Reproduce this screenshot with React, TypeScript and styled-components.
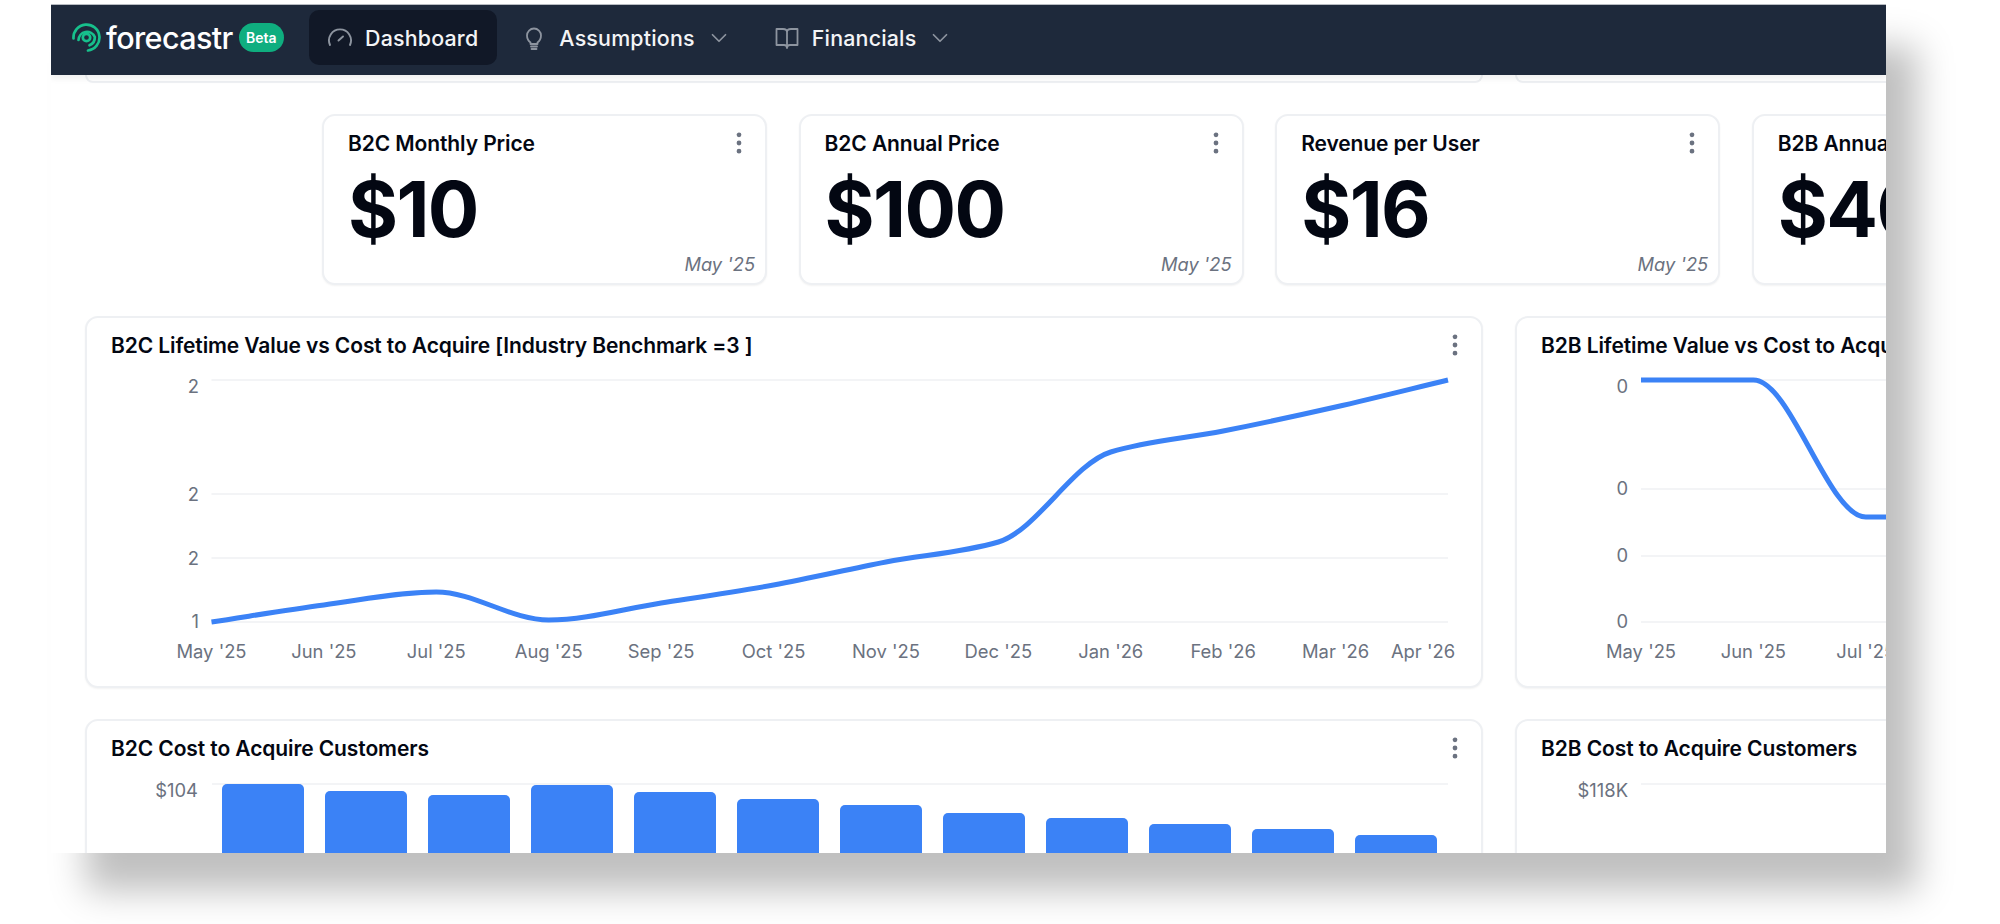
import React from 'react'
import styled, { createGlobalStyle } from 'styled-components'
import { ChevronDown, EllipsisVertical } from 'lucide-react'

const GlobalStyle = createGlobalStyle`
  html, body { margin: 0; background: #fff; }
  body { font-family: Inter, "Liberation Sans", sans-serif; }
  * { box-sizing: border-box; }
`

const Page = styled.div`
  width: 2000px;
  height: 924px;
  padding: 4px 0 0 51px;
  overflow: hidden;
`

const Panel = styled.div`
  width: 1835px;
  height: 849px;
  background: #fff;
  overflow: hidden;
  border-top: 1px solid #b8bcc2;
  box-shadow: 33px 40px 34px -2px rgba(0, 0, 0, 0.25);
`

const Nav = styled.nav`
  position: relative;
  z-index: 1;
  height: 70px;
  padding: 0 0 5px 21px;
  display: flex;
  align-items: center;
  gap: 6px;
  background: #1e293b;
  box-shadow: 0 4px 6px rgba(0, 0, 0, 0.06);
`

const Logo = styled.div`
  display: flex;
  align-items: center;
  width: 231px;
  flex-shrink: 0;
`

const LogoText = styled.span`
  margin-left: 5px;
  font-size: 30.5px;
  font-weight: 500;
  letter-spacing: -0.6px;
  color: #fff;
`

const BetaBadge = styled.span`
  margin-left: 6px;
  width: 45px;
  height: 29px;
  border-radius: 15px;
  display: flex;
  align-items: center;
  justify-content: center;
  background: #0fae7f;
  color: #fff;
  font-size: 14px;
  font-weight: 600;
`

const NavItem = styled.div<{ $active?: boolean }>`
  height: 55px;
  padding: 0 ${(p) => (p.$active ? 19 : 18)}px 0 18px;
  display: flex;
  align-items: center;
  gap: 12px;
  flex-shrink: 0;
  border-radius: 10px;
  background: ${(p) => (p.$active ? '#111827' : 'transparent')};
  color: #f3f4f6;
  font-size: 21.4px;
  font-weight: 500;
  letter-spacing: 0.2px;
  svg { flex-shrink: 0; color: #8d949f; }
`

const Chevron = styled(ChevronDown)`
  margin-left: -1px;
`

const Content = styled.main`
  padding-left: 34px;
`

const Row = styled.section<{ $indent?: number; $gap?: number; $top?: number }>`
  display: flex;
  gap: ${(p) => p.$gap ?? 32}px;
  margin-top: ${(p) => p.$top ?? 31}px;
  margin-left: ${(p) => p.$indent || 0}px;
`

const Stub = styled.div`
  width: 1398px;
  height: 8px;
  flex-shrink: 0;
  border: 2px solid #eef0f3;
  border-top: 0;
  border-radius: 0 0 13px 13px;
`

const Card = styled.article<{ $width: number; $height: number }>`
  position: relative;
  width: ${(p) => p.$width}px;
  height: ${(p) => p.$height}px;
  flex-shrink: 0;
  background: #fff;
  border: 2px solid #eef0f3;
  border-radius: 13px;
  box-shadow: 0 1px 2px rgba(0, 0, 0, 0.05);
`

const CardHeader = styled.header`
  height: 52px;
  padding: 2px 12px 0 24px;
  display: flex;
  align-items: center;
  justify-content: space-between;
  svg { color: #6b7280; flex-shrink: 0; }
`

const CardTitle = styled.h3`
  margin: 0;
  font-size: 21px;
  font-weight: 600;
  letter-spacing: -0.1px;
  white-space: nowrap;
  color: #030712;
`

const KpiValue = styled.div`
  margin: 3px 0 0 24px;
  font-size: 76.5px;
  line-height: 76px;
  font-weight: 700;
  letter-spacing: -1.6px;
  color: #030712;
`

const KpiDate = styled.span`
  position: absolute;
  right: 10px;
  bottom: 8px;
  font-size: 18.3px;
  font-style: italic;
  color: #6b7280;
`

const Plot = styled.svg`
  display: block;
  overflow: visible;
  text {
    font-family: Inter, "Liberation Sans", sans-serif;
    font-size: 18.4px;
    fill: #6b7280;
  }
`

// screen x of a card's left edge plus its border, subtracted from the plot points below
const LEFT_A = 87
const LEFT_B = 1517
const TOP_LINE = 370
const TOP_BAR = 773

const months = ["May '25", "Jun '25", "Jul '25", "Aug '25", "Sep '25", "Oct '25", "Nov '25", "Dec '25", "Jan '26", "Feb '26", "Mar '26", "Apr '26"]

// same curve recharts draws for type="monotone"
function monotonePath(pts: number[][]) {
  const n = pts.length
  const slopes: number[] = []
  for (let i = 0; i < n - 1; i++) slopes.push((pts[i + 1][1] - pts[i][1]) / (pts[i + 1][0] - pts[i][0]))
  const t: number[] = [slopes[0]]
  for (let i = 1; i < n - 1; i++) {
    const a = slopes[i - 1]
    const b = slopes[i]
    t.push(a * b <= 0 ? 0 : (2 * a * b) / (a + b))
  }
  t.push(slopes[n - 2])
  let d = `M${pts[0][0]},${pts[0][1]}`
  for (let i = 0; i < n - 1; i++) {
    const h = (pts[i + 1][0] - pts[i][0]) / 3
    d += ` C${pts[i][0] + h},${pts[i][1] + t[i] * h} ${pts[i + 1][0] - h},${pts[i + 1][1] - t[i + 1] * h} ${pts[i + 1][0]},${pts[i + 1][1]}`
  }
  return d
}

const step = (1448 - 211.5) / 11
const ltvB2c = [622, 605, 592, 620, 603, 585, 562, 542, 452, 431, 407, 380]

const GaugeIcon = () => (
  <svg width="26" height="26" viewBox="0 0 26 26" fill="none" stroke="currentColor" strokeWidth="1.9" strokeLinecap="round">
    <path d="M3 20 A11 11 0 1 1 23 20" />
    <path d="M11.5 15.5 L16 11.5" />
  </svg>
)

const BulbIcon = () => (
  <svg width="26" height="26" viewBox="0 0 26 26" fill="none" stroke="currentColor" strokeWidth="1.8" strokeLinecap="round" strokeLinejoin="round">
    <path d="M9.5 17.5 C7.5 16 6 13.8 6 10.5 A7 7 0 0 1 20 10.5 C20 13.8 18.5 16 16.5 17.5 V19 H9.5 Z" />
    <path d="M10 21.5 H16" />
    <path d="M10.5 24 H15.5" />
  </svg>
)

const BookIcon = () => (
  <svg width="26" height="26" viewBox="0 0 26 26" fill="none" stroke="currentColor" strokeWidth="1.8" strokeLinejoin="round">
    <path d="M13 7 C13 5 11 4 9 4 H2.5 V20 H10 C12 20 13 21 13 23 C13 21 14 20 16 20 H23.5 V4 H17 C15 4 13 5 13 7 V23" />
  </svg>
)

const Mark = () => (
  <svg width="29" height="29" viewBox="0 0 29 29" fill="none" stroke="#17c08c" strokeWidth="2.7" strokeLinecap="round">
    <path d="M1.5 15.5 A13 13 0 1 1 16 27.5" />
    <path d="M6.5 17 A8.5 8.5 0 0 1 22.8 14 A8.5 8.5 0 0 1 17.5 22.3" />
    <circle cx="14.5" cy="14.5" r="3.7" />
  </svg>
)

const kpis = [
  { title: 'B2C Monthly Price', value: '$10' },
  { title: 'B2C Annual Price', value: '$100' },
  { title: 'Revenue per User', value: '$16' },
  { title: 'B2B Annual Price', value: '$400' },
]

const barTops = [784, 791, 795, 785, 792, 799, 805, 813, 818, 824, 829, 835]

const Dots = () => <EllipsisVertical size={28} strokeWidth={2.1} />

export default function App() {
  const linePts = ltvB2c.map((y, i) => [211.5 + step * i - LEFT_A, y - TOP_LINE])
  const linePtsB = [380, 380, 517, 517, 517].map((y, i) => [1641 + step * i - LEFT_B, y - TOP_LINE])

  return (
    <Page>
      <GlobalStyle />
      <Panel>
        <Nav>
          <Logo>
            <Mark />
            <LogoText>forecastr</LogoText>
            <BetaBadge>Beta</BetaBadge>
          </Logo>
          <NavItem $active><GaugeIcon /><span>Dashboard</span></NavItem>
          <NavItem><BulbIcon /><span>Assumptions</span><Chevron size={26} strokeWidth={1.6} /></NavItem>
          <NavItem><BookIcon /><span>Financials</span><Chevron size={26} strokeWidth={1.6} /></NavItem>
        </Nav>
        <Content>
          <Row $top={0}><Stub /><Stub /></Row>
          <Row $indent={237} $gap={31.6}>
            {kpis.map((k) => (
              <Card key={k.title} $width={445} $height={171}>
                <CardHeader>
                  <CardTitle>{k.title}</CardTitle>
                  <Dots />
                </CardHeader>
                <KpiValue>{k.value}</KpiValue>
                <KpiDate>May '25</KpiDate>
              </Card>
            ))}
          </Row>
          <Row>
            <Card $width={1398} $height={372}>
              <CardHeader>
                <CardTitle>B2C Lifetime Value vs Cost to Acquire [Industry Benchmark =3 ]</CardTitle>
                <Dots />
              </CardHeader>
              <Plot width="1394" height="300">
                {[380, 494, 558, 622].map((y) => (
                  <line key={y} x1={211.5 - LEFT_A} x2={1448 - LEFT_A} y1={y - TOP_LINE} y2={y - TOP_LINE} stroke="#f3f4f6" strokeWidth="2" />
                ))}
                {[[387, '2'], [495, '2'], [559, '2'], [622, '1']].map(([y, t], i) => (
                  <text key={i} x={199 - LEFT_A} y={(y as number) - TOP_LINE + 6} textAnchor="end">{t}</text>
                ))}
                {months.map((m, i) => (
                  <text key={m} x={i === 11 ? 1423 - LEFT_A : 211.5 + step * i - LEFT_A} y={652 - TOP_LINE + 6} textAnchor="middle">{m}</text>
                ))}
                <path d={monotonePath(linePts)} fill="none" stroke="#3b82f6" strokeWidth="5" />
              </Plot>
            </Card>
            <Card $width={1398} $height={372}>
              <CardHeader>
                <CardTitle>B2B Lifetime Value vs Cost to Acquire [Industry Benchmark =3 ]</CardTitle>
                <Dots />
              </CardHeader>
              <Plot width="1394" height="300">
                {[380, 489, 556, 622].map((y) => (
                  <line key={y} x1={1641 - LEFT_B} x2={2877 - LEFT_B} y1={y - TOP_LINE} y2={y - TOP_LINE} stroke="#f3f4f6" strokeWidth="2" />
                ))}
                {[387, 489, 556, 622].map((y) => (
                  <text key={y} x={1628 - LEFT_B} y={y - TOP_LINE + 6} textAnchor="end">0</text>
                ))}
                {months.slice(0, 3).map((m, i) => (
                  <text key={m} x={1641 + step * i - LEFT_B} y={652 - TOP_LINE + 6} textAnchor="middle">{m}</text>
                ))}
                <path d={monotonePath(linePtsB)} fill="none" stroke="#3b82f6" strokeWidth="5" />
              </Plot>
            </Card>
          </Row>
          <Row>
            <Card $width={1398} $height={372}>
              <CardHeader>
                <CardTitle>B2C Cost to Acquire Customers</CardTitle>
                <Dots />
              </CardHeader>
              <Plot width="1394" height="300">
                <line x1={212 - LEFT_A} x2={1448 - LEFT_A} y1={784 - TOP_BAR} y2={784 - TOP_BAR} stroke="#f3f4f6" strokeWidth="2" />
                <text x={198 - LEFT_A} y={791 - TOP_BAR + 6} textAnchor="end">$104</text>
                {barTops.map((y, i) => (
                  <rect key={i} x={222 + 103 * i - LEFT_A} y={y - TOP_BAR} width="82" height="200" rx="5" fill="#3b82f6" />
                ))}
              </Plot>
            </Card>
            <Card $width={1398} $height={372}>
              <CardHeader>
                <CardTitle>B2B Cost to Acquire Customers</CardTitle>
              </CardHeader>
              <Plot width="1394" height="300">
                <line x1={1641 - LEFT_B} x2={2877 - LEFT_B} y1={784 - TOP_BAR} y2={784 - TOP_BAR} stroke="#f3f4f6" strokeWidth="2" />
                <text x={1628 - LEFT_B} y={791 - TOP_BAR + 6} textAnchor="end">$118K</text>
              </Plot>
            </Card>
          </Row>
        </Content>
      </Panel>
    </Page>
  )
}
